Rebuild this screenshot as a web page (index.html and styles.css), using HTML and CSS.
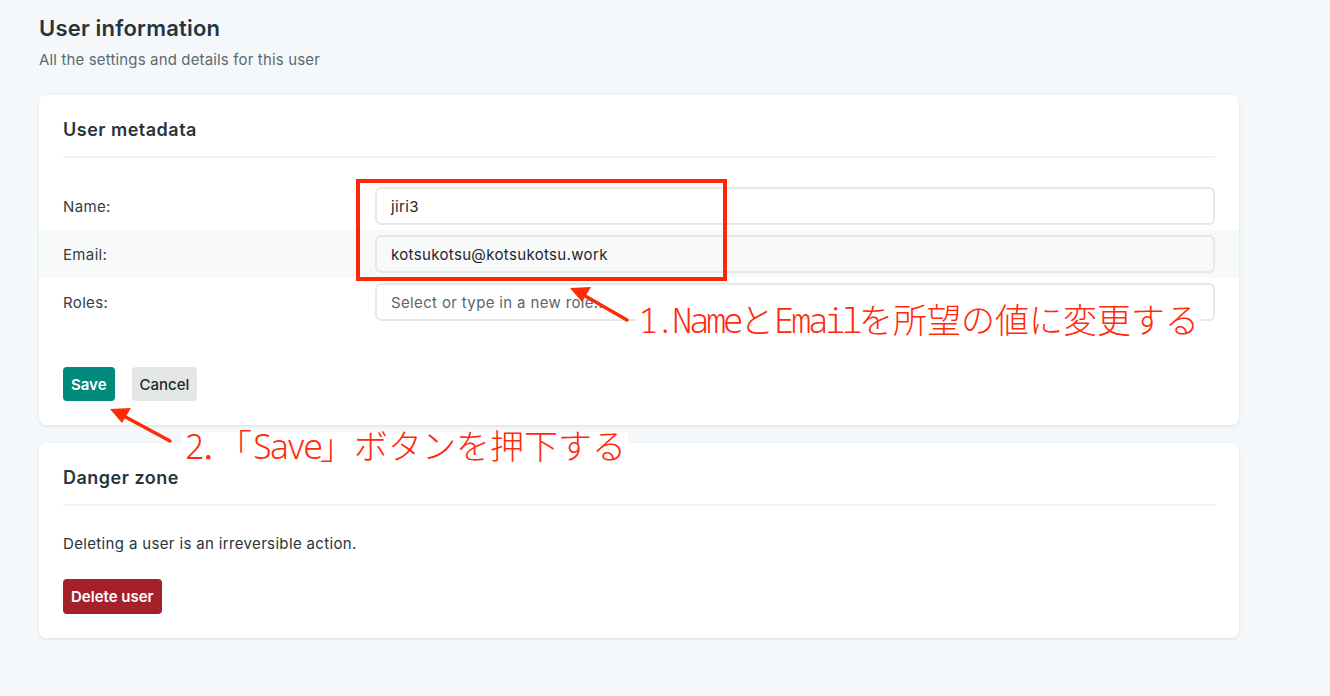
FILE: index.html
```html
<!DOCTYPE html>
<html lang="en">
<head>
<meta charset="utf-8">
<title>User information</title>
<link rel="stylesheet" href="styles.css">
</head>
<body>
<div class="page">
  <header class="page-head">
    <h1 class="title">User information</h1>
    <p class="subtitle">All the settings and details for this user</p>
  </header>

  <section class="card">
    <h2 class="card-title">User metadata</h2>
    <div class="form">
      <div class="row">
        <label class="label">Name:</label>
        <div class="input">jiri3</div>
      </div>
      <div class="row row-alt">
        <label class="label">Email:</label>
        <div class="input">kotsukotsu@kotsukotsu.work</div>
      </div>
      <div class="row">
        <label class="label">Roles:</label>
        <div class="input placeholder">Select or type in a new role...</div>
      </div>
    </div>
    <div class="actions">
      <button class="btn btn-save">Save</button>
      <button class="btn btn-cancel">Cancel</button>
    </div>
  </section>

  <section class="card">
    <h2 class="card-title">Danger zone</h2>
    <p class="card-text">Deleting a user is an irreversible action.</p>
    <div class="actions actions-danger">
      <button class="btn btn-delete">Delete user</button>
    </div>
  </section>

  <div class="mark-box"></div>
  <svg class="arrows" width="1330" height="696" viewBox="0 0 1330 696">
    <g stroke="#ff2a0a" stroke-width="3.5" stroke-linecap="round" fill="none">
      <line x1="627" y1="320" x2="580" y2="293"/>
      <line x1="170" y1="441" x2="120" y2="414"/>
    </g>
    <g fill="#ff2a0a">
      <polygon points="570,288 591,287 582,302"/>
      <polygon points="110,409 131,408 122,423"/>
    </g>
  </svg>
  <div class="note note-1"><span class="lat">1.Name</span>と<span class="lat">Email</span>を所望の値に変更する</div>
  <div class="note note-2"><span class="lat">2</span>．「<span class="lat">Save</span>」ボタンを押下する</div>
</div>
</body>
</html>
```

FILE: styles.css
```css
* { box-sizing: border-box; }

html, body {
  margin: 0;
  padding: 0;
  background: #f5f8fa;
}

body {
  font-family: Inter, "Noto Sans", "Liberation Sans", sans-serif;
  color: #2b3640;
  font-size: 15px;
  letter-spacing: 0.35px;
}

.page {
  position: relative;
  width: 1330px;
  height: 696px;
  padding: 14px 0 0 39px;
}

.page-head { margin-bottom: 25px; }

.title {
  margin: 0;
  font-size: 22px;
  line-height: 28px;
  font-weight: 600;
  color: #27343d;
  letter-spacing: 0.2px;
}

.subtitle {
  margin: 8px 0 0;
  font-size: 15px;
  line-height: 20px;
  color: #5d6870;
  letter-spacing: 0.15px;
}

.card {
  width: 1200px;
  background: #fff;
  border-radius: 7px;
  box-shadow: 0 1px 3px rgba(30, 45, 60, 0.12);
  padding: 24px;
  margin-bottom: 18px;
}

.card-title {
  margin: 0;
  font-size: 18px;
  line-height: 22px;
  font-weight: 600;
  color: #27343d;
  padding-bottom: 15px;
  border-bottom: 2px solid #f0f2f4;
  letter-spacing: 0.5px;
}

.form {
  margin: 24px -24px 0;
}

.row {
  display: flex;
  align-items: center;
  height: 48px;
  padding: 0 24px;
}

.row-alt { background: #f8f9f9; }

.label {
  width: 312px;
  flex: none;
  color: #333e46;
}

.input {
  flex: 1;
  height: 38px;
  border: 2px solid #e6e8e9;
  border-radius: 6px;
  padding: 0 14px;
  display: flex;
  align-items: center;
  color: #1c252c;
}

.placeholder { color: #5b656d; }

.actions {
  display: flex;
  gap: 17px;
  margin-top: 41px;
}

.btn {
  font-family: inherit;
  font-size: 15px;
  font-weight: 600;
  height: 34px;
  border: none;
  border-radius: 4px;
  padding: 0 8px;
  letter-spacing: 0;
}

.btn-save { background: #008a7b; color: #fff; }
.btn-cancel { background: #e5e7e7; color: #1e282e; font-weight: 500; }
.btn-delete { background: #a4212c; color: #fff; height: 35px; }

.card-text {
  margin: 28px 0 0;
  line-height: 20px;
  color: #27343d;
}

.actions-danger { margin-top: 25px; }

.mark-box {
  position: absolute;
  left: 356px;
  top: 179px;
  width: 371px;
  height: 102px;
  border: 4px solid #ff250a;
}

.arrows {
  position: absolute;
  left: 0;
  top: 0;
  pointer-events: none;
}

.note {
  position: absolute;
  background: #fff;
  color: #ff2a0a;
  font-family: "Noto Sans Mono", "DejaVu Sans Mono", "Noto Sans CJK JP", monospace;
  font-size: 34px;
  font-weight: 300;
  line-height: 28px;
  height: 28px;
  white-space: nowrap;
  padding: 0 2px;
  letter-spacing: 0;
}

.note .lat { letter-spacing: -3.4px; }

.note-1 { left: 636px; top: 306px; }
.note-2 { left: 182px; top: 432px; }
```
